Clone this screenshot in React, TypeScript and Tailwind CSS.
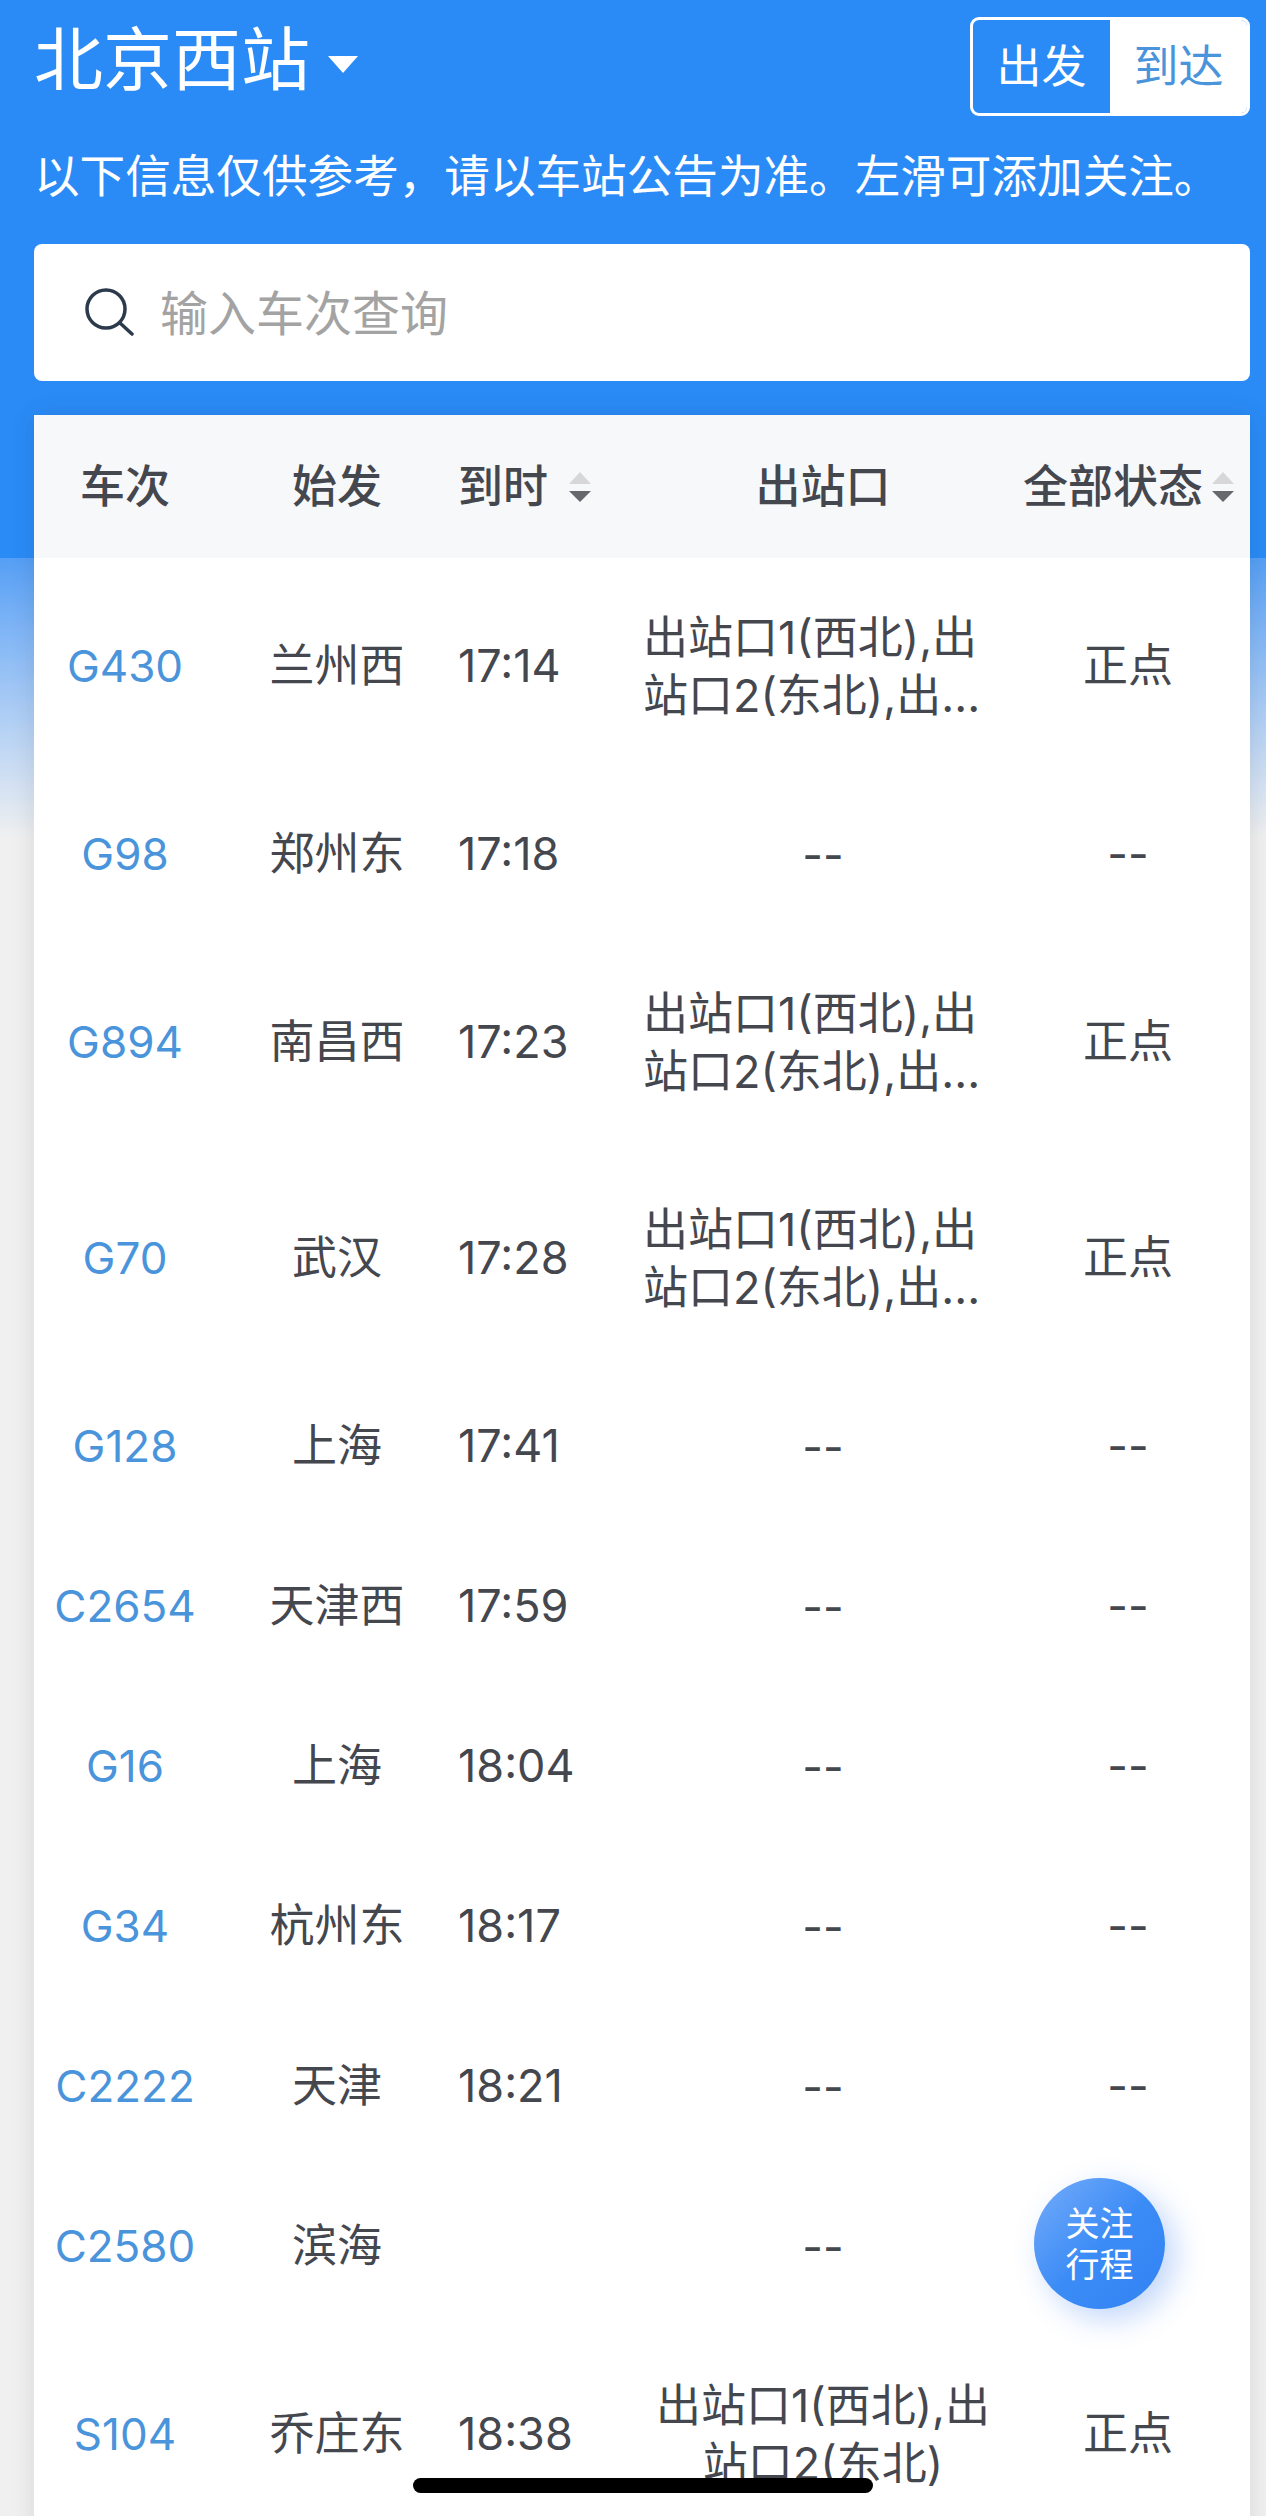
type Row = {
  train: string
  from: string
  time: string
  exit: string
  status: string
  tall?: boolean
  clamp?: boolean
}

const exitsLong = "出站口1(西北),出站口2(东北),出..."

const rows: Row[] = [
  { train: "G430", from: "兰州西", time: "17:14", exit: exitsLong, status: "正点", tall: true, clamp: true },
  { train: "G98", from: "郑州东", time: "17:18", exit: "--", status: "--" },
  { train: "G894", from: "南昌西", time: "17:23", exit: exitsLong, status: "正点", tall: true, clamp: true },
  { train: "G70", from: "武汉", time: "17:28", exit: exitsLong, status: "正点", tall: true, clamp: true },
  { train: "G128", from: "上海", time: "17:41", exit: "--", status: "--" },
  { train: "C2654", from: "天津西", time: "17:59", exit: "--", status: "--" },
  { train: "G16", from: "上海", time: "18:04", exit: "--", status: "--" },
  { train: "G34", from: "杭州东", time: "18:17", exit: "--", status: "--" },
  { train: "C2222", from: "天津", time: "18:21", exit: "--", status: "--" },
  { train: "C2580", from: "滨海", time: "", exit: "--", status: "" },
  { train: "S104", from: "乔庄东", time: "18:38", exit: "出站口1(西北),出站口2(东北)", status: "正点", tall: true },
]

function SortCaret() {
  return (
    <svg width="24" height="30" viewBox="0 0 24 30" className="shrink-0">
      <path d="M12 0 L23 12 H1 Z" fill="#d7d7d9" />
      <path d="M12 30 L23 19 H1 Z" fill="#66686e" />
    </svg>
  )
}

export default function App() {
  return (
    <div
      className="relative h-[2516px] overflow-hidden bg-[#f0f0f0]"
      style={{ fontFamily: 'Inter, "Noto Sans CJK SC", sans-serif' }}
    >
      {/* blue band behind the header and its fade */}
      <div className="absolute inset-x-0 top-0 h-[558px] bg-[#2a8bf6]" />
      <div className="absolute inset-x-0 top-[558px] h-[280px] bg-gradient-to-b from-[#559ff5] to-[#f0f0f0]" />

      <div className="relative pl-[34px] pr-[16px]">
        <div className="flex items-start justify-between pt-[17px]">
          <div className="flex items-center text-white">
            <span className="text-[69px] leading-[86px]">北京西站</span>
            <svg width="30" height="17" viewBox="0 0 30 17" className="ml-[18px] mt-[8px]">
              <path d="M0 0 H30 L15 17 Z" fill="#fff" />
            </svg>
          </div>
          <div className="flex h-[99px] w-[280px] overflow-hidden rounded-[9px] border-[3px] border-white text-[45px] leading-none">
            <div className="flex w-[137px] items-center justify-center text-white">出发</div>
            <div className="flex flex-1 items-center justify-center bg-white text-[#4a94db]">到达</div>
          </div>
        </div>

        <p className="mt-[31px] whitespace-nowrap text-[45.6px] leading-[60px] text-white">
          {"以下信息仅供参考\uFF0C请以车站公告为准。左滑可添加关注。"}
        </p>

        <div className="mt-[37px] flex h-[137px] items-center rounded-[8px] bg-white pl-[50px]">
          <svg width="50" height="50" viewBox="0 0 50 50" fill="none" stroke="#2b3a4c" strokeWidth="3.5" strokeLinecap="round">
            <circle cx="22" cy="21" r="19" />
            <path d="M36 35 L48 46" />
          </svg>
          <span className="ml-[26px] mt-[2px] text-[48px] leading-none text-[#a3a3a3]">输入车次查询</span>
        </div>

        <div className="mt-[34px] bg-white text-[#45474f] shadow-[0_0_24px_rgba(0,0,0,0.1)]">
          <div className="grid h-[143px] grid-cols-[182px_242px_165px_400px_1fr] items-center bg-[#f7f8fa] text-[45px] font-medium">
            <div className="text-center">车次</div>
            <div className="text-center">始发</div>
            <div className="flex items-center gap-[20px]">
              到时
              <SortCaret />
            </div>
            <div className="text-center">出站口</div>
            <div className="flex items-center gap-[8px]">
              <span className="whitespace-nowrap">全部状态</span>
              <SortCaret />
            </div>
          </div>

          {rows.map((row) => (
            <div
              key={row.train}
              className={`grid grid-cols-[182px_242px_165px_400px_210px] items-center text-[45px] ${
                row.tall ? "h-[216px]" : "h-[160px]"
              }`}
            >
              <div className="text-center text-[44px] text-[#4a94db]">{row.train}</div>
              <div className="text-center">{row.from}</div>
              <div>{row.time}</div>
              <div className={`mx-auto w-[360px] pt-[2px] leading-[58px] ${row.clamp ? "text-left" : "text-center"}`}>
                {row.exit}
              </div>
              <div className="text-center">{row.status}</div>
            </div>
          ))}
        </div>
      </div>

      {/* floating shortcut */}
      <div className="absolute left-[1034px] top-[2178px] flex h-[131px] w-[131px] items-center justify-center rounded-full bg-gradient-to-br from-[#74acf9] via-[#3c8cf6] to-[#3183f4] text-center text-[34px] leading-[41px] text-white shadow-[10px_10px_30px_rgba(50,120,240,0.3)]">
        关注
        <br />
        行程
      </div>

      {/* home indicator */}
      <div className="absolute left-[413px] top-[2478px] h-[15px] w-[460px] rounded-full bg-black" />
    </div>
  )
}
